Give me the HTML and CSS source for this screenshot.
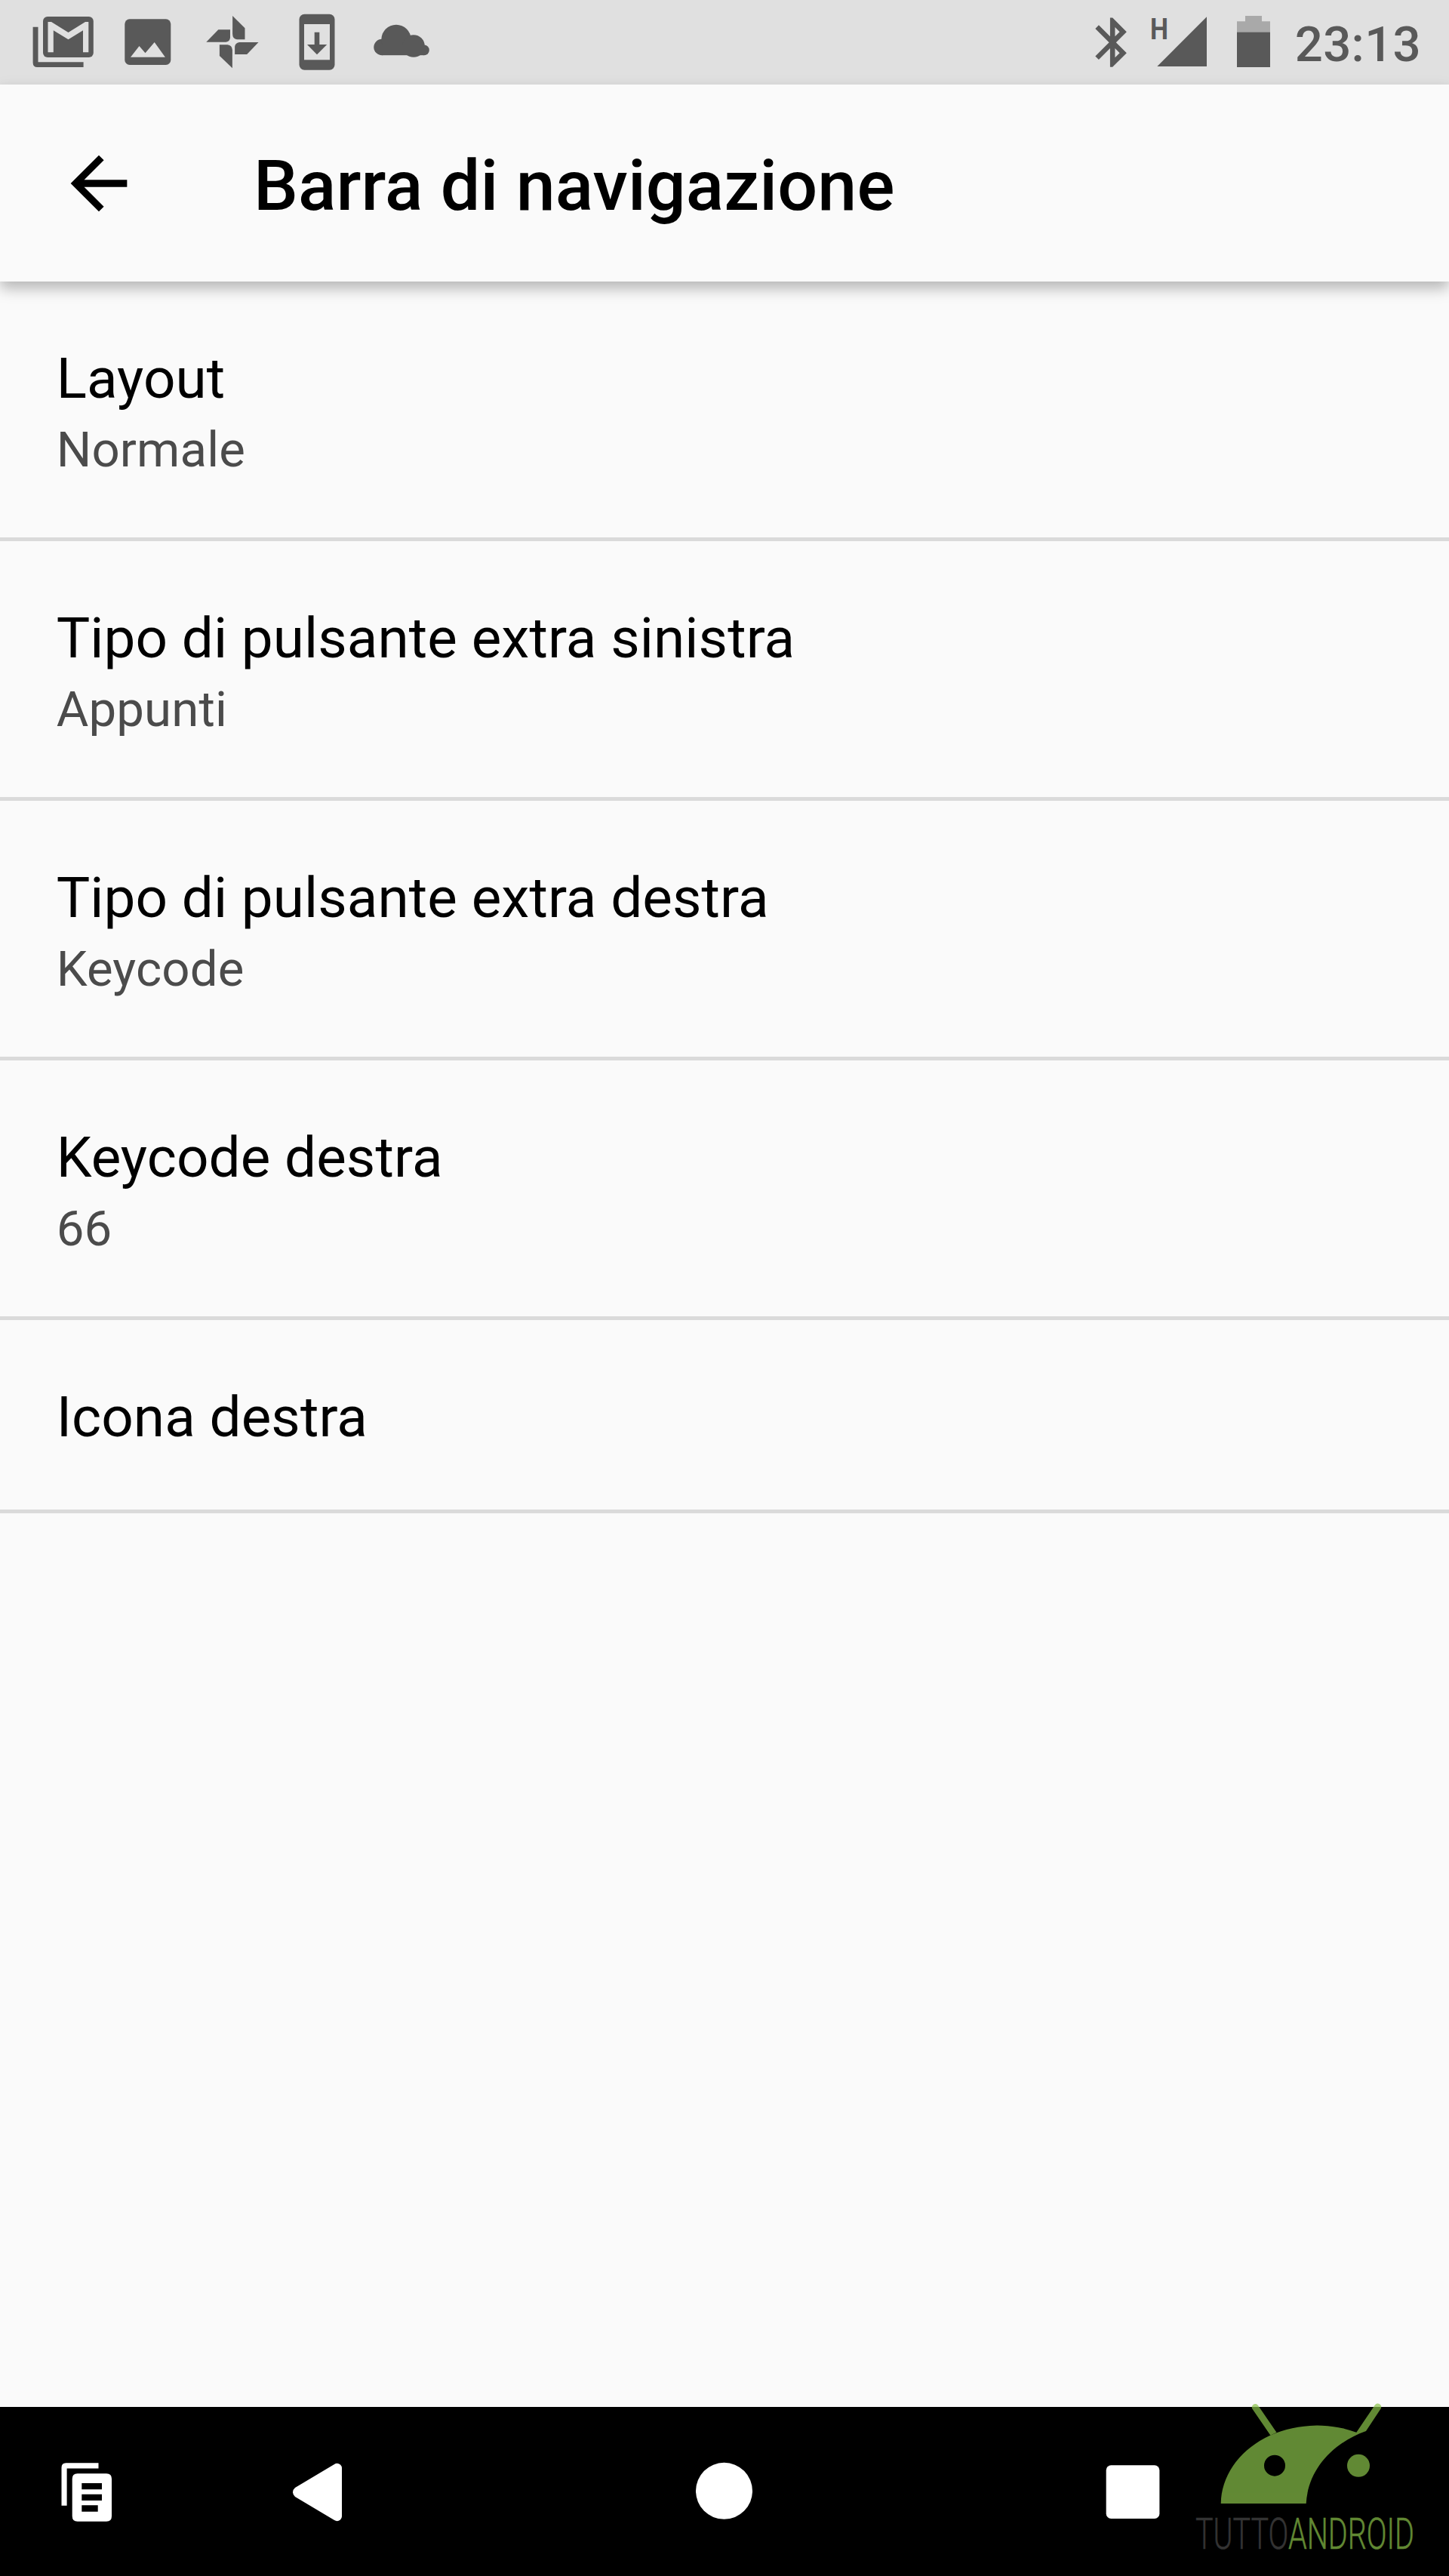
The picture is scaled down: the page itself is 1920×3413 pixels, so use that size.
FILE: index.html
```html
<!DOCTYPE html>
<html lang="it">
<head>
  <meta charset="utf-8">
  <title>Barra di navigazione</title>

  <link rel="stylesheet" href="styles.css">
</head>
<body>
  <div class="status-bar">
    <div class="notifications">
      <!-- Gmail -->
      <svg viewBox="0 0 112 112">
        <path d="M15.6 35.7H22.5V82.3H82.6V89H21.6Q15.6 89 15.6 83Z"/>
        <rect x="29" y="22" width="66.8" height="54" rx="6"/>
        <path class="cut" d="M35.5 29H40L62.5 43 85 29H89.3V69.3H82V40.3L62.5 52.3 42.8 40.3V69.3H35.5Z"/>
      </svg>
      <!-- Immagine -->
      <svg viewBox="0 0 112 112">
        <rect x="25.3" y="25.3" width="61" height="60.7" rx="6.5"/>
        <path class="cut" d="M33 75.7L44.5 61 52.5 70.3 64.7 56 78.9 75.7Z"/>
      </svg>
      <!-- Foto -->
      <svg viewBox="0 0 112 112">
        <path d="M56.1 21L72.5 37.3V52.3H62Q56.1 51.5 56.1 45Z"/>
        <path d="M21.3 55.7L37.3 39.3H53V50Q52.5 55 47.5 55.7Z"/>
        <path d="M90.5 56L75.2 72H59.1V62Q59.6 56.8 65 56Z"/>
        <path d="M55.9 90.3L38.9 74V59.3H49.5Q55.4 60 55.9 66Z"/>
      </svg>
      <!-- Aggiornamento -->
      <svg viewBox="0 0 112 112">
        <rect x="32.5" y="18.7" width="47" height="74" rx="7"/>
        <rect class="cut" x="39" y="32" width="34" height="47.3"/>
        <path d="M52.7 42.7H59.3V59H69.2L56 72.3 43 59H52.7Z"/>
      </svg>
      <!-- Cloud -->
      <svg viewBox="0 0 112 112">
        <circle cx="30" cy="62.5" r="10.7"/>
        <circle cx="49" cy="52.4" r="19.7"/>
        <circle cx="72" cy="61" r="14.8"/>
        <circle cx="86" cy="66.4" r="6.8"/>
        <rect x="30" y="60" width="56" height="13.2"/>
      </svg>
    </div>

    <div class="system">
      <svg class="bluetooth" viewBox="0 0 24 24">
        <path d="M17.71 7.71L12 2h-1v7.59L6.41 5 5 6.41 10.59 12 5 17.59 6.41 19 11 14.41V22h1l5.71-5.71-4.3-4.29 4.3-4.29zM13 5.83l1.88 1.88L13 9.59V5.83zm1.88 10.46L13 18.17v-3.76l1.88 1.88z"/>
      </svg>
      <svg class="signal" viewBox="0 0 80 112">
        <text x="4" y="52" textLength="24" lengthAdjust="spacingAndGlyphs">H</text>
        <path d="M79 22.3V88H13.3Z"/>
      </svg>
      <svg class="battery" viewBox="0 0 44 112">
        <path class="empty" d="M11 21H33V28.3H44V43H0V28.3H11Z"/>
        <rect y="42.7" width="44" height="46.3"/>
      </svg>
      <span class="clock">23:13</span>
    </div>
  </div>

  <header class="app-bar">
    <svg class="back" viewBox="0 0 24 24">
      <path d="M20 11H7.83l5.59-5.59L12 4l-8 8 8 8 1.41-1.41L7.83 13H20v-2z"/>
    </svg>
    <h1>Barra di navigazione</h1>
  </header>

  <ul class="settings">
    <li>
      <div class="name">Layout</div>
      <div class="value">Normale</div>
    </li>
    <li>
      <div class="name">Tipo di pulsante extra sinistra</div>
      <div class="value">Appunti</div>
    </li>
    <li>
      <div class="name">Tipo di pulsante extra destra</div>
      <div class="value">Keycode</div>
    </li>
    <li>
      <div class="name">Keycode destra</div>
      <div class="value">66</div>
    </li>
    <li>
      <div class="name">Icona destra</div>
    </li>
  </ul>

  <nav class="nav-bar">
    <svg viewBox="0 0 112 112">
      <path d="M22.5 74.7V24.3Q22.5 18.3 28.5 18.3H71.5V25.6H29.6V74.7Z"/>
      <path fill-rule="evenodd" d="M43.7 32.3H82Q89 32.3 89 39.3V88.7Q89 95.7 82 95.7H43.7Q36.7 95.7 36.7 88.7V39.3Q36.7 32.3 43.7 32.3ZM49.3 45V53.3H76V45ZM49.3 59.7V68H76V59.7ZM49.3 74.3V82.7H70.7V74.3Z"/>
    </svg>
    <svg viewBox="0 0 112 112">
      <path d="M27 51L79 20Q83 17.5 87 20.5Q89 22.5 89 25V89Q89 91.5 87 93.5Q83 96.5 79 94L27 63Q24 60.5 24 57Q24 53.5 27 51Z"/>
    </svg>
    <svg viewBox="0 0 112 112">
      <circle cx="55.5" cy="55.3" r="37.5"/>
    </svg>
    <svg viewBox="0 0 112 112">
      <rect x="20.7" y="21.3" width="70.7" height="70.7" rx="6.5"/>
    </svg>
  </nav>

  <!-- Logo TuttoAndroid sovrapposto -->
  <svg class="watermark" viewBox="0 0 320 233">
    <g class="robot">
      <path fill-rule="evenodd" d="M37.7 137A127.5 104.3 0 0 1 217.3 42.7L241.8 6.5A4.5 4.5 0 0 1 249.5 11.5L230 41C185 57 153 93 150.7 137ZM95 86.7A14 14 0 0 0 123 86.7A14 14 0 0 0 95 86.7Z"/>
      <path d="M79.5 11.8A4.4 4.4 0 0 1 87 7L111.5 42.8 103.5 46.8Z"/>
      <circle cx="220" cy="86.8" r="15"/>
    </g>
    <text x="4" y="197.3" textLength="290" lengthAdjust="spacingAndGlyphs">TUTTO<tspan>ANDROID</tspan></text>
  </svg>
</body>
</html>
```

FILE: styles.css
```css
* {
  box-sizing: border-box;
}
body {
  display: flex;
  flex-direction: column;
  position: relative;
  width: 1920px;
  height: 3413px;
  margin: 0;
  overflow: hidden;
  background-color: #fafafa;
  color: #000;
  font-family: Roboto, sans-serif;
}
svg {
  display: block;
  flex-shrink: 0;
}

/* Barra di stato */
.status-bar {
  display: flex;
  justify-content: space-between;
  height: 112px;
  padding: 0 37px 0 28px;
  background-color: #e0e0e0;
  color: #595959;
  fill: #595959;
}
.notifications {
  display: flex;
}
.notifications svg {
  width: 112px;
  height: 112px;
}
.cut {
  fill: #e0e0e0;
}
.system {
  display: flex;
}
.bluetooth {
  width: 78.4px;
  height: 78.4px;
  margin-top: 17px;
}
.signal {
  width: 80px;
  height: 112px;
  margin-left: 6px;
}
.signal text {
  font-size: 39.4px;
  font-weight: 700;
}
.battery {
  width: 44px;
  height: 112px;
  margin-left: 39px;
}
.battery .empty {
  fill: #a9a9a9;
}
.clock {
  margin-left: 33px;
  padding-top: 3px;
  font-size: 65.33px;
  font-weight: 500;
  letter-spacing: 0.3px;
  line-height: 112px;
}

/* Titolo */
.app-bar {
  display: flex;
  align-items: center;
  flex-shrink: 0;
  height: 261px;
  padding-left: 74.67px;
  background-color: #fafafa;
  box-shadow: 0 9px 18px rgba(0, 0, 0, 0.28);
}
.back {
  width: 112px;
  height: 112px;
}
.app-bar h1 {
  margin: 6px 0 0 149.33px;
  font-size: 93.33px;
  font-weight: 500;
  letter-spacing: 0.12px;
  line-height: 110px;
}

/* Elenco */
.settings {
  flex: 1;
  margin: 0;
  padding: 0;
  list-style: none;
}
.settings li {
  height: 344px;
  padding: 85px 74.67px 0;
  border-bottom: 5px solid #dadada;
}
.settings li:last-child {
  height: 256px;
}
.name {
  font-size: 74.67px;
  letter-spacing: 0.08px;
  line-height: 88px;
}
.value {
  margin-top: 12px;
  color: #4b4b4b;
  font-size: 65.33px;
  letter-spacing: 0.15px;
  line-height: 76px;
}

/* Barra di navigazione */
.nav-bar {
  display: grid;
  grid-template-columns: 230px 380px 699px 383px;
  place-items: center;
  flex-shrink: 0;
  height: 224px;
  background-color: #000;
  fill: #fff;
}
.nav-bar svg {
  width: 112px;
  height: 112px;
}

.watermark {
  position: absolute;
  right: 20px;
  bottom: 0;
  width: 320px;
  height: 233px;
}
.robot {
  fill: #8bc34a;
  opacity: 0.7;
}
.watermark text {
  fill: #333;
  stroke: #333;
  stroke-width: 0.5px;
  font-size: 56.7px;
  font-weight: 300;
}
.watermark tspan {
  fill: #618833;
  stroke: #618833;
}
```
